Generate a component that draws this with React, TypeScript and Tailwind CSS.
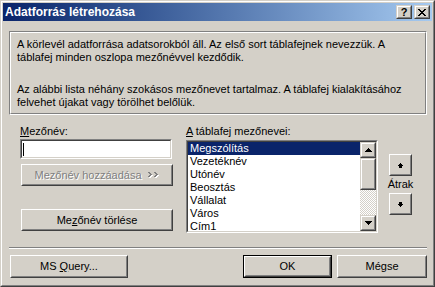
import React from "react";

const FONT = "font-['Liberation_Sans',Arial,sans-serif]";

type BProps = {
  className?: string;
  innerClass?: string;
  children?: React.ReactNode;
  variant?: "push" | "small";
};

function Raised({ className = "", innerClass = "", children, variant = "push" }: BProps) {
  const outer =
    variant === "push"
      ? "border-t-white border-l-white border-r-[#404040] border-b-[#404040]"
      : "border-t-[#d4d0c8] border-l-[#d4d0c8] border-r-[#404040] border-b-[#404040]";
  const inner =
    variant === "push"
      ? "border-t-[#d4d0c8] border-l-[#d4d0c8] border-r-[#808080] border-b-[#808080]"
      : "border-t-white border-l-white border-r-[#808080] border-b-[#808080]";
  return (
    <div className={`border bg-[#d4d0c8] ${outer} ${className}`}>
      <div className={`w-full h-full border flex items-center justify-center ${inner} ${innerClass}`}>
        {children}
      </div>
    </div>
  );
}

function Sunken({ className = "", innerClass = "", children }: BProps) {
  return (
    <div className={`border border-t-[#808080] border-l-[#808080] border-r-white border-b-white ${className}`}>
      <div
        className={`w-full h-full border border-t-[#404040] border-l-[#404040] border-r-[#d4d0c8] border-b-[#d4d0c8] bg-white overflow-hidden ${innerClass}`}
      >
        {children}
      </div>
    </div>
  );
}

function CloseGlyph() {
  const rows = ["11000011", "01100110", "00111100", "00011000", "00111100", "01100110", "11000011"];
  return (
    <svg width="8" height="7" viewBox="0 0 8 7" shapeRendering="crispEdges">
      {rows.flatMap((r, y) =>
        r.split("").map((c, x) => (c === "1" ? <rect key={`${x}-${y}`} x={x} y={y} width="1" height="1" fill="#000" /> : null))
      )}
    </svg>
  );
}

function Pixels({ rows, color, w, h }: { rows: string[]; color: string; w: number; h: number }) {
  return (
    <svg width={w} height={h} viewBox={`0 0 ${w} ${h}`} shapeRendering="crispEdges">
      {rows.flatMap((r, y) =>
        r.split("").map((c, x) => (c === "1" ? <rect key={`${x}-${y}`} x={x} y={y} width="1" height="1" fill={color} /> : null))
      )}
    </svg>
  );
}

const UP_TRI = ["0001000", "0011100", "0111110", "1111111"];
const DOWN_TRI = ["1111111", "0111110", "0011100", "0001000"];
const UP_ARROW = ["00100", "01110", "11111", "01110", "01110"];
const DOWN_ARROW = ["01110", "01110", "11111", "01110", "00100"];

function DisabledChevrons() {
  const rows = ["11000011000", "01100001100", "00110000110", "01100001100", "11000011000"];
  return (
    <span className="relative inline-block w-[12px] h-[6px] ml-[6px]">
      <span className="absolute left-[1px] top-[1px]">
        <Pixels rows={rows} color="#ffffff" w={11} h={5} />
      </span>
      <span className="absolute left-0 top-0">
        <Pixels rows={rows} color="#808080" w={11} h={5} />
      </span>
    </span>
  );
}

const ITEMS = ["Megszólítás", "Vezetéknév", "Utónév", "Beosztás", "Vállalat", "Város", "Cím1"];

export default function App() {
  return (
    <div className={`w-[435px] h-[287px] ${FONT} text-[11px] leading-[13px] text-black select-none`}>
      <div className="w-full h-full border border-t-[#d4d0c8] border-l-[#d4d0c8] border-r-[#404040] border-b-[#404040]">
        <div className="w-full h-full border border-t-white border-l-white border-r-[#808080] border-b-[#808080] bg-[#d4d0c8] p-[1px] flex flex-col">
          {/* Title bar */}
          <div className="h-[18px] shrink-0 flex items-center bg-linear-to-r from-[#0a246a] to-[#a6caf0] pl-[2px] pr-[2px]">
            <span className="flex-1 text-white font-bold text-[12px] leading-[18px] whitespace-nowrap">
              Adatforrás létrehozása
            </span>
            <Raised variant="small" className="w-[16px] h-[14px]">
              <span className="font-bold text-[11px] leading-[11px] mt-[1px]">?</span>
            </Raised>
            <Raised variant="small" className="w-[16px] h-[14px] ml-[2px]">
              <CloseGlyph />
            </Raised>
          </div>

          {/* Info box */}
          <div className="mt-[10px] ml-[6px] w-[418px] h-[84px] border border-t-[#808080] border-l-[#808080] border-r-white border-b-white">
            <div className="w-full h-full border border-t-white border-l-white border-r-[#808080] border-b-[#808080] pl-[6px] pt-[5px] whitespace-nowrap">
              <p>
                A körlevél adatforrása adatsorokból áll. Az első sort táblafejnek nevezzük. A
                <br />
                táblafej minden oszlopa mezőnévvel kezdődik.
              </p>
              <p className="mt-[19px]">
                Az alábbi lista néhány szokásos mezőnevet tartalmaz. A táblafej kialakításához
                <br />
                felvehet újakat vagy törölhet belőlük.
              </p>
            </div>
          </div>

          {/* Middle section */}
          <div className="mt-[10px] h-[108px] pl-[17px] flex items-start">
            <div className="w-[153px] flex flex-col">
              <div className="h-[13px] whitespace-nowrap">
                <span className="underline">M</span>ezőnév:
              </div>
              <Sunken className="mt-[1px] w-[152px] h-[20px]" innerClass="flex items-center pl-[1px]">
                <div className="w-[1px] h-[13px] bg-black" />
              </Sunken>
              <Raised className="mt-[5px] ml-[1px] w-[152px] h-[22px]">
                <span className="text-[#808080] [text-shadow:1px_1px_0_#ffffff] whitespace-nowrap">
                  Mezőnév hozzáadása
                </span>
                <DisabledChevrons />
              </Raised>
              <Raised className="mt-[23px] ml-[1px] w-[152px] h-[22px]">
                <span className="whitespace-nowrap">
                  Me<span className="underline">z</span>őnév törlése
                </span>
              </Raised>
            </div>

            <div className="ml-[13px] w-[192px] flex flex-col">
              <div className="h-[13px] whitespace-nowrap">
                <span className="underline">A</span> táblafej mezőnevei:
              </div>
              <Sunken className="mt-[2px] w-[192px] h-[93px]" innerClass="flex">
                <div className="flex-1 flex flex-col overflow-hidden">
                  {ITEMS.map((it, i) => (
                    <div
                      key={it}
                      className={`h-[13px] shrink-0 leading-[13px] pl-[2px] whitespace-nowrap ${
                        i === 0 ? "bg-[#0a246a] text-white" : ""
                      }`}
                    >
                      {it}
                    </div>
                  ))}
                </div>
                <div className="w-[16px] flex flex-col">
                  <Raised variant="small" className="w-[16px] h-[16px] shrink-0">
                    <Pixels rows={UP_TRI} color="#000" w={7} h={4} />
                  </Raised>
                  <Raised variant="small" className="w-[16px] h-[32px] shrink-0" />
                  <div className="flex-1 bg-[conic-gradient(#ffffff_25%,#d4d0c8_0_50%,#ffffff_0_75%,#d4d0c8_0)] bg-[length:2px_2px]" />
                  <Raised variant="small" className="w-[16px] h-[16px] shrink-0">
                    <Pixels rows={DOWN_TRI} color="#000" w={7} h={4} />
                  </Raised>
                </div>
              </Sunken>
            </div>

            <div className="ml-[11px] w-[23px] mt-[29px] flex flex-col items-center">
              <Raised className="w-[23px] h-[22px]">
                <Pixels rows={UP_ARROW} color="#000" w={5} h={5} />
              </Raised>
              <div className="mt-[2px] h-[13px] whitespace-nowrap text-center">Átrak</div>
              <Raised className="mt-[2px] w-[23px] h-[22px]">
                <Pixels rows={DOWN_ARROW} color="#000" w={5} h={5} />
              </Raised>
            </div>
          </div>

          {/* Separator */}
          <div className="mt-[14px] ml-[6px] w-[418px] h-[2px] border-t border-b border-t-[#808080] border-b-white" />

          {/* Bottom buttons */}
          <div className="mt-[6px] pl-[7px] flex">
            <Raised className="w-[118px] h-[23px]">
              <span className="whitespace-nowrap">
                MS <span className="underline">Q</span>uery...
              </span>
            </Raised>
            <div className="ml-[115px] w-[89px] h-[23px] border border-black">
              <Raised className="w-full h-full">
                <span>OK</span>
              </Raised>
            </div>
            <Raised className="ml-[5px] w-[90px] h-[23px]">
              <span>Mégse</span>
            </Raised>
          </div>
        </div>
      </div>
    </div>
  );
}
